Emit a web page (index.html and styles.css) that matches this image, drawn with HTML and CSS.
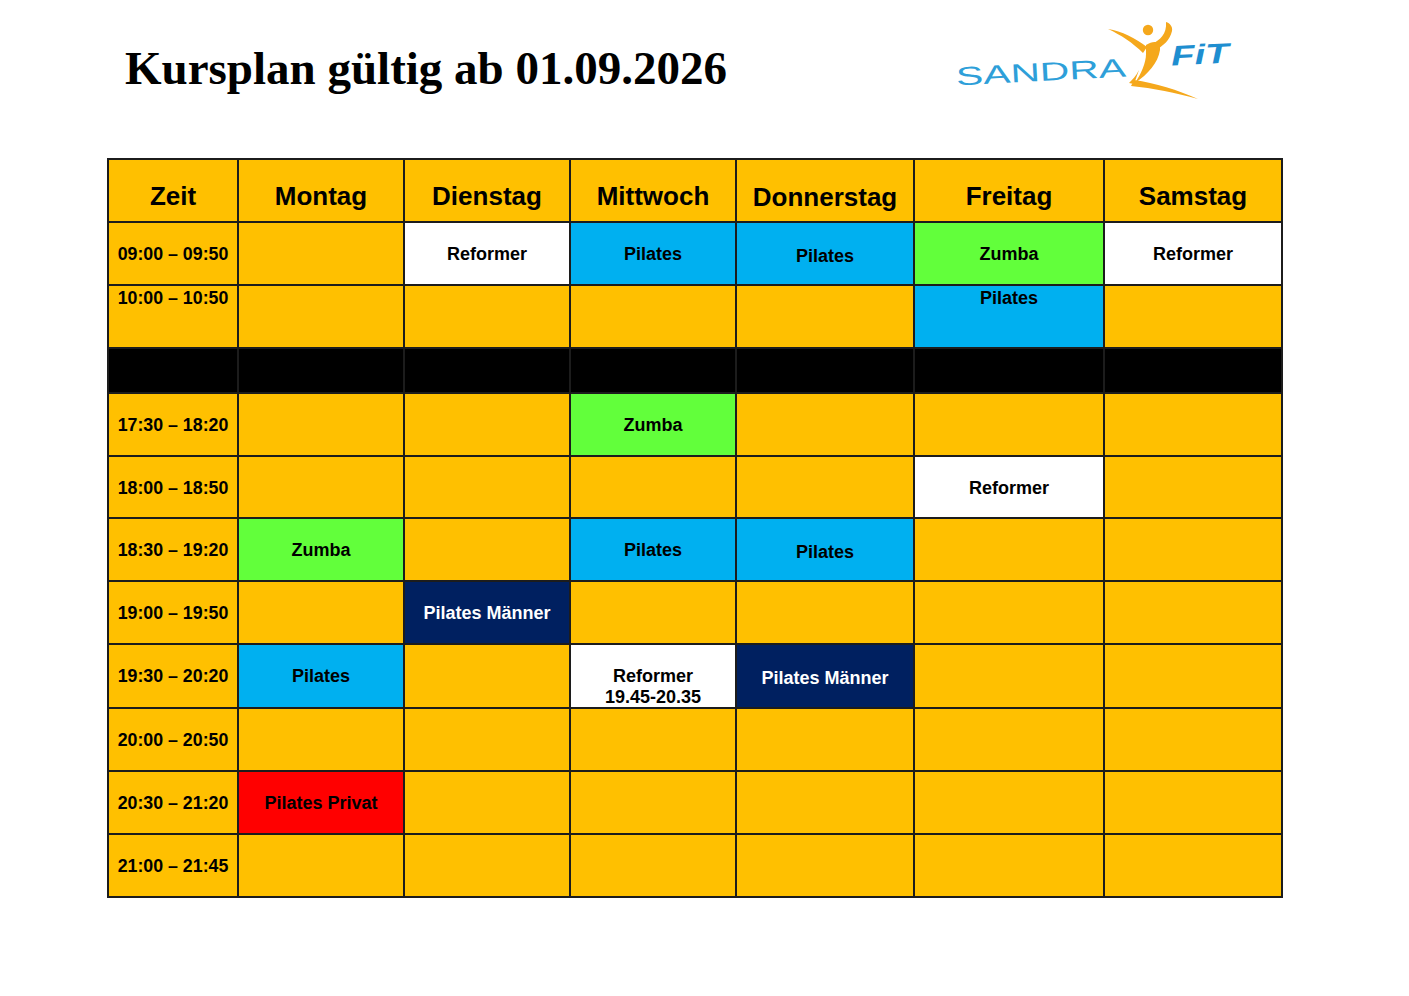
FILE: index.html
```html
<!DOCTYPE html>
<html lang="de">
<head>
<meta charset="utf-8">
<title>Kursplan</title>
<link rel="stylesheet" href="styles.css">
</head>
<body>
<div class="header">
  <h1 class="title">Kursplan gültig ab 01.09.2026</h1>
  <svg class="logo" width="310" height="110" viewBox="940 0 310 110" xmlns="http://www.w3.org/2000/svg">
    <g transform="rotate(-3 1040 72)">
      <text x="956" y="81" class="logo-sandra" textLength="170" lengthAdjust="spacingAndGlyphs">SANDRA</text>
    </g>
    <g fill="#F5A81C">
      <circle cx="1148" cy="30" r="5.2"/>
      <path d="M1152,44 C1160,40 1167,34 1166,22 C1170,23 1173,27 1172,31 C1170,40 1163,46 1156,50 Z"/>
      <path d="M1108,29 C1122,31 1135,38 1147,47 L1143,53 C1133,43 1121,35 1108,29 Z"/>
      <path d="M1146,45 C1154,40 1161,41 1160,50 C1158,63 1148,74 1135,83 C1141,74 1146,63 1146,54 C1146,50 1146,47 1146,45 Z"/>
      <path d="M1134,80 C1155,83 1178,90 1198,99 C1176,93 1153,88 1131,86 Z"/>
      <path d="M1139,70 C1136,76 1132,80 1129,83 L1134,84 Z"/>
    </g>
    <g transform="rotate(-3 1200 55)">
      <text x="1171" y="64" class="logo-fit" textLength="58" lengthAdjust="spacingAndGlyphs">FiT</text>
    </g>
  </svg>
</div>

<div class="plan">
  <div class="c h">Zeit</div>
  <div class="c h">Montag</div>
  <div class="c h">Dienstag</div>
  <div class="c h">Mittwoch</div>
  <div class="c h dn">Donnerstag</div>
  <div class="c h">Freitag</div>
  <div class="c h">Samstag</div>

  <div class="c t">09:00 – 09:50</div>
  <div class="c"></div>
  <div class="c w">Reformer</div>
  <div class="c b">Pilates</div>
  <div class="c b dn">Pilates</div>
  <div class="c g">Zumba</div>
  <div class="c w">Reformer</div>

  <div class="c t top">10:00 – 10:50</div>
  <div class="c"></div>
  <div class="c"></div>
  <div class="c"></div>
  <div class="c"></div>
  <div class="c b top">Pilates</div>
  <div class="c"></div>

  <div class="c k"></div>
  <div class="c k"></div>
  <div class="c k"></div>
  <div class="c k"></div>
  <div class="c k"></div>
  <div class="c k"></div>
  <div class="c k"></div>

  <div class="c t">17:30 – 18:20</div>
  <div class="c"></div>
  <div class="c"></div>
  <div class="c g">Zumba</div>
  <div class="c"></div>
  <div class="c"></div>
  <div class="c"></div>

  <div class="c t">18:00 – 18:50</div>
  <div class="c"></div>
  <div class="c"></div>
  <div class="c"></div>
  <div class="c"></div>
  <div class="c w">Reformer</div>
  <div class="c"></div>

  <div class="c t">18:30 – 19:20</div>
  <div class="c g">Zumba</div>
  <div class="c"></div>
  <div class="c b">Pilates</div>
  <div class="c b dn">Pilates</div>
  <div class="c"></div>
  <div class="c"></div>

  <div class="c t">19:00 – 19:50</div>
  <div class="c"></div>
  <div class="c n">Pilates Männer</div>
  <div class="c"></div>
  <div class="c"></div>
  <div class="c"></div>
  <div class="c"></div>

  <div class="c t">19:30 – 20:20</div>
  <div class="c b">Pilates</div>
  <div class="c"></div>
  <div class="c w">Reformer<br>19.45-20.35</div>
  <div class="c n dn">Pilates Männer</div>
  <div class="c"></div>
  <div class="c"></div>

  <div class="c t">20:00 – 20:50</div>
  <div class="c"></div>
  <div class="c"></div>
  <div class="c"></div>
  <div class="c"></div>
  <div class="c"></div>
  <div class="c"></div>

  <div class="c t">20:30 – 21:20</div>
  <div class="c r">Pilates Privat</div>
  <div class="c"></div>
  <div class="c"></div>
  <div class="c"></div>
  <div class="c"></div>
  <div class="c"></div>

  <div class="c t">21:00 – 21:45</div>
  <div class="c"></div>
  <div class="c"></div>
  <div class="c"></div>
  <div class="c"></div>
  <div class="c"></div>
  <div class="c"></div>
</div>
</body>
</html>
```

FILE: styles.css
```css
html, body {
  margin: 0;
  padding: 0;
  background: #ffffff;
}

body {
  font-family: "Liberation Sans", Arial, sans-serif;
  color: #000000;
}

.header {
  display: flex;
  height: 158px;
}

.title {
  width: 940px;
  flex: none;
  box-sizing: border-box;
  margin: 0;
  padding: 45px 0 0 125px;
  font-family: "Liberation Serif", "Times New Roman", serif;
  font-weight: bold;
  font-size: 47px;
  line-height: 47px;
  white-space: nowrap;
}

.logo {
  display: block;
  flex: none;
}

.logo-sandra {
  font-family: "Liberation Sans", Arial, sans-serif;
  font-size: 26px;
  font-weight: normal;
  fill: #2E9FD9;
}

.logo-fit {
  font-family: "Liberation Sans", Arial, sans-serif;
  font-size: 28px;
  font-weight: bold;
  font-style: italic;
  fill: #1E8ED0;
}

.plan {
  display: grid;
  width: 1176px;
  margin-left: 107px;
  box-sizing: border-box;
  padding: 2px;
  gap: 2px;
  background: #1c1c1c;
  grid-template-columns: 128px 164px 164px 164px 176px 188px 176px;
  grid-template-rows: 61px 61px 61px 43px 61px 60px 61px 61px 62px 61px 61px 61px;
}

.c {
  background: #FFC000;
  text-align: center;
  font-weight: bold;
  font-size: 18px;
  line-height: 21px;
  padding-top: 21px;
  box-sizing: border-box;
  white-space: nowrap;
  overflow: hidden;
}

.h {
  font-size: 26px;
  line-height: 30px;
  padding-top: 21px;
}

.t {
  font-size: 17.8px;
}

.top {
  padding-top: 2px;
}

.dn {
  padding-top: 23px;
}

.h.dn {
  padding-top: 22px;
}

.w { background: #FFFFFF; }
.b { background: #00B0F0; }
.g { background: #62FF3B; }
.n { background: #002060; color: #FFFFFF; }
.r { background: #FF0000; }
.k { background: #000000; }
```
